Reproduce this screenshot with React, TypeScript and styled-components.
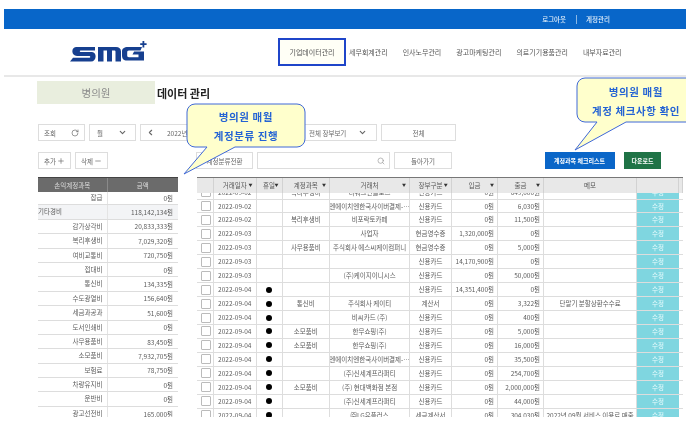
import React from 'react';
import styled, { createGlobalStyle } from 'styled-components';
import { ChevronDown, ChevronLeft, Minus, Plus, RotateCw, Search } from 'lucide-react';

const GlobalStyle = createGlobalStyle`
  html, body {
    margin: 0;
    padding: 0;
    background: #fff;
    font-family: "Noto Sans CJK KR", "Noto Sans", sans-serif;
  }
`;

const accounts = [
  { name: '잡급', amount: '0원' },
  { name: '기타경비', amount: '118,142,134원', total: true },
  { name: '감가상각비', amount: '20,833,333원' },
  { name: '복리후생비', amount: '7,029,320원' },
  { name: '여비교통비', amount: '720,750원' },
  { name: '접대비', amount: '0원' },
  { name: '통신비', amount: '134,335원' },
  { name: '수도광열비', amount: '156,640원' },
  { name: '세금과공과', amount: '51,600원' },
  { name: '도서인쇄비', amount: '0원' },
  { name: '사무용품비', amount: '83,450원' },
  { name: '소모품비', amount: '7,932,705원' },
  { name: '보험료', amount: '78,750원' },
  { name: '차량유지비', amount: '0원' },
  { name: '운반비', amount: '0원' },
  { name: '광고선전비', amount: '165,000원' },
];

const headers = [
  { label: '' },
  { label: '거래일자', arrow: true },
  { label: '휴일', arrow: true },
  { label: '계정과목', arrow: true },
  { label: '거래처', arrow: true },
  { label: '장부구분', arrow: true },
  { label: '입금', arrow: true },
  { label: '출금', arrow: true },
  { label: '메모' },
  { label: '' },
  { label: '' },
];

const NHN = '엔에이치엔한국사이버결제-…';
const SSG = '(주)신세계프라퍼티';

const ledger = [
  ['2022-09-02', false, '복리후생비', '더워크인클로즈', '신용카드', '0원', '649,000원', ''],
  ['2022-09-02', false, '', NHN, '신용카드', '0원', '6,030원', ''],
  ['2022-09-02', false, '복리후생비', '비포락토카페', '신용카드', '0원', '11,500원', ''],
  ['2022-09-03', false, '', '사업자', '현금영수증', '1,320,000원', '0원', ''],
  ['2022-09-03', false, '사무용품비', '주식회사 에스씨케이컴퍼니', '현금영수증', '0원', '5,000원', ''],
  ['2022-09-03', false, '', '', '신용카드', '14,170,900원', '0원', ''],
  ['2022-09-03', false, '', '(주)케이지이니시스', '신용카드', '0원', '50,000원', ''],
  ['2022-09-04', true, '', '', '신용카드', '14,351,400원', '0원', ''],
  ['2022-09-04', true, '통신비', '주식회사 케이티', '계산서', '0원', '3,322원', '단말기 분할상환수수료'],
  ['2022-09-04', true, '', '비씨카드 (주)', '신용카드', '0원', '400원', ''],
  ['2022-09-04', true, '소모품비', '한무쇼핑(주)', '신용카드', '0원', '5,000원', ''],
  ['2022-09-04', true, '소모품비', '한무쇼핑(주)', '신용카드', '0원', '16,000원', ''],
  ['2022-09-04', true, '', NHN, '신용카드', '0원', '35,500원', ''],
  ['2022-09-04', true, '', SSG, '신용카드', '0원', '254,700원', ''],
  ['2022-09-04', true, '소모품비', '(주) 현대백화점 본점', '신용카드', '0원', '2,000,000원', ''],
  ['2022-09-04', true, '', SSG, '신용카드', '0원', '44,000원', ''],
  ['2022-09-04', true, '', '㈜LG유플러스', '세금계산서', '0원', '304,030원', '2022년 09월 서비스 이용료 매출'],
] as const;

const navItems = ['세무회계관리', '인사노무관리', '광고마케팅관리', '의료기기용품관리', '내부자료관리'];

const Logo = () => (
  <svg width="78" height="22" viewBox="0 0 78 22" fill="#163f8f">
    <path d="M6 6h19v3.6H10.500c-.9 0-.9 1.400 0 1.400H22c5 0 5 9.600-1 9.600H0l3-3.800h16.500c1 0 1-1.800 0-1.800H7C1 15 1 6 6 6z" />
    <path d="M28 6h18c3 0 5 1.500 5 4.500v10.100h-5.500V10.500c0-.6-.4-.9-.9-.9h-2.600v11h-5v-11h-3.500v11H28z" />
    <path d="M58 6h14l-1.500 3.600H59c-1.500 0-1.800.8-1.800 2v3c0 1.200.5 1.600 1.800 1.600h9.500v-2.600h-6l1.600-3h9.900v9H57c-3.500 0-5-2-5-5v-4.600C52 8 54 6 58 6z" />
    <path d="M72.500 0h1.800v2.300h2.300v1.800h-2.300v2.300h-1.800V4.100h-2.300V2.300h2.300z" />
  </svg>
);

const Callout = ({ right }: { right?: boolean }) =>
  right ? (
    <svg width="125" height="76" viewBox="0 0 125 76">
      <path
        d="M12 2H140V46H53L2 74 24 46H12A8 8 0 0 1 4 38V10A8 8 0 0 1 12 2Z"
        fill="#ffffcc"
        stroke="#3f68d8"
      />
    </svg>
  ) : (
    <svg width="125" height="73" viewBox="0 0 125 73">
      <path
        d="M12 1H114A8 8 0 0 1 122 9V36A8 8 0 0 1 114 44H52L1 71 24 44H12A8 8 0 0 1 4 36V9A8 8 0 0 1 12 1Z"
        fill="#ffffcc"
        stroke="#3f68d8"
      />
    </svg>
  );

const App = () => (
  <Page>
    <GlobalStyle />
    <TopBar>
      <TopLink>로그아웃</TopLink>
      <TopDivider />
      <TopLink>계정관리</TopLink>
    </TopBar>
    <Header>
      <LogoWrap>
        <Logo />
      </LogoWrap>
      <Nav>
        <ActiveNavItem>기업데이터관리</ActiveNavItem>
        {navItems.map(item => (
          <NavItem key={item}>{item}</NavItem>
        ))}
      </Nav>
    </Header>

    <TitleRow>
      <TitleBadge>병의원</TitleBadge>
      <Title>데이터 관리</Title>
    </TitleRow>

    <ToolRow>
      <ToolButton $width={47}>
        조회 <RotateCw size={8} />
      </ToolButton>
      <SelectButton $width={47}>
        월 <ChevronDown size={9} strokeWidth={3} />
      </SelectButton>
      <ToolButton $width={153}>
        <ChevronLeft size={9} strokeWidth={3} />
        <DateText>2022년 09월</DateText>
      </ToolButton>
      <LedgerSelect $width={80}>
        전체 장부보기 <ChevronDown size={9} strokeWidth={3} />
      </LedgerSelect>
      <CenterButton $width={75}>전체</CenterButton>
    </ToolRow>

    <ToolRow $gap={11}>
      <ToolButton $width={33}>
        추가 <Plus size={8} />
      </ToolButton>
      <ToolButton $width={33}>
        삭제 <Minus size={8} />
      </ToolButton>
      <CenterButton $width={57} $left={84}>
        계정분류전환
      </CenterButton>
      <SearchBox>
        <Search size={8} color="#999" />
      </SearchBox>
      <CenterButton $width={58}>돌아가기</CenterButton>
      <FilledButton $width={70} $color="#0a66c8" $left={88.5}>
        계정과목 체크리스트
      </FilledButton>
      <FilledButton $width={37} $color="#1f7346" $left={5.5}>
        다운로드
      </FilledButton>
    </ToolRow>

    <Tables>
      <AccountTable>
        <AccountHead>
          <span>손익계정과목</span>
          <span>금액</span>
        </AccountHead>
        {accounts.map(row => (
          <AccountRow key={row.name} $total={row.total}>
            <AccountName $total={row.total}>{row.name}</AccountName>
            <AccountAmount>{row.amount}</AccountAmount>
          </AccountRow>
        ))}
      </AccountTable>

      <Ledger>
        <LedgerHead>
          {headers.map((head, i) => (
            <HeadCell key={i}>
              {head.label}
              {head.arrow && <SortArrow>▼</SortArrow>}
            </HeadCell>
          ))}
        </LedgerHead>
        <LedgerBody>
          {ledger.map((row, i) => (
            <LedgerRow key={i}>
              <Cell>
                <Check />
              </Cell>
              <Cell>{row[0]}</Cell>
              <Cell>{row[1] && <Dot />}</Cell>
              <Cell>{row[2]}</Cell>
              <Cell>{row[3]}</Cell>
              <Cell>{row[4]}</Cell>
              <MoneyCell>{row[5]}</MoneyCell>
              <MoneyCell>{row[6]}</MoneyCell>
              <Cell>{row[7]}</Cell>
              <EditCell>수정</EditCell>
            </LedgerRow>
          ))}
        </LedgerBody>
      </Ledger>
    </Tables>

    <LeftCallout>
      <Callout />
      <CalloutText>
        <div>병의원 매월</div>
        <div>계정분류 진행</div>
      </CalloutText>
    </LeftCallout>
    <RightCallout>
      <Callout right />
      <CalloutText>
        <div>병의원 매월</div>
        <div>계정 체크사항 확인</div>
      </CalloutText>
    </RightCallout>
  </Page>
);

const Page = styled.div`
  position: relative;
  width: 682px;
  height: 408px;
  margin: 9px 0 0 4px;
  overflow: hidden;
  background: #fff;
  color: #5c5c5c;
  font-size: 7px;
  filter: blur(0.35px);
`;
const TopBar = styled.div`
  height: 20px;
  padding-right: 76px;
  background: #0866c9;
  display: flex;
  justify-content: flex-end;
  align-items: center;
`;
const TopLink = styled.span`
  color: #e6f0fa;
  font-size: 6.5px;
  font-weight: 500;
`;
const TopDivider = styled.i`
  width: 1px;
  height: 9px;
  margin: 0 9.5px;
  background: #8ab8e6;
`;
const Header = styled.div`
  height: 46px;
  border-bottom: 2px solid #e8e8e8;
  display: flex;
  align-items: center;
`;
const LogoWrap = styled.div`
  width: 274px;
  padding-left: 66px;
  box-sizing: border-box;
  display: flex;
`;
const Nav = styled.nav`
  display: flex;
  align-items: center;
  gap: 15px;
`;
const NavItem = styled.a`
  font-size: 7px;
  color: #555;
  white-space: nowrap;
`;
const ActiveNavItem = styled(NavItem)`
  width: 68px;
  height: 28px;
  box-sizing: border-box;
  margin-right: -12px;
  border: 2px solid #1f45c9;
  background: #fffff6;
  display: flex;
  align-items: center;
  justify-content: center;
`;
const TitleRow = styled.div`
  margin: 4px 0 0 33px;
  display: flex;
  align-items: center;
`;
const TitleBadge = styled.div`
  width: 118px;
  height: 23px;
  background: #e9eede;
  color: #8b8b8b;
  font-size: 10.5px;
  display: flex;
  align-items: center;
  justify-content: center;
`;
const Title = styled.h1`
  margin: 0 0 0 2px;
  color: #222;
  font-size: 11px;
  font-weight: 700;
`;
const ToolRow = styled.div<{ $gap?: number }>`
  height: 17px;
  margin: ${p => p.$gap ?? 20}px 0 0 34px;
  display: flex;
  gap: 4px;
`;
const ToolButton = styled.div<{ $width: number }>`
  width: ${p => p.$width}px;
  box-sizing: border-box;
  padding: 0 5px;
  border: 1px solid #ddd;
  display: flex;
  align-items: center;
  justify-content: space-between;
  font-size: 6.5px;
  color: #666;
`;
const SelectButton = styled(ToolButton)`
  padding: 0 8px 0 7px;
`;
const DateText = styled.span`
  flex: 1;
  margin-left: 12px;
`;
const LedgerSelect = styled(ToolButton)`
  padding: 0 9px 0 12px;
  border-left: none;
`;
const CenterButton = styled.div<{ $width: number; $left?: number }>`
  width: ${p => p.$width}px;
  margin-left: ${p => p.$left ?? 0}px;
  box-sizing: border-box;
  border: 1px solid #ddd;
  display: flex;
  align-items: center;
  justify-content: center;
  font-size: 6.5px;
  color: #666;
`;
const SearchBox = styled.div`
  width: 133px;
  box-sizing: border-box;
  padding-right: 4px;
  border: 1px solid #ddd;
  display: flex;
  align-items: center;
  justify-content: flex-end;
`;
const FilledButton = styled.div<{ $width: number; $color: string; $left: number }>`
  width: ${p => p.$width}px;
  margin-left: ${p => p.$left}px;
  background: ${p => p.$color};
  color: #fff;
  font-size: 6px;
  font-weight: 700;
  display: flex;
  align-items: center;
  justify-content: center;
  white-space: nowrap;
`;
const Tables = styled.div`
  height: 240px;
  margin: 8px 0 0 34px;
  display: flex;
  gap: 18.7px;
`;
const AccountTable = styled.div`
  width: 140px;
  overflow: hidden;
  font-size: 6.5px;
`;
const AccountHead = styled.div`
  position: relative;
  z-index: 1;
  height: 15px;
  margin-bottom: -1px;
  background: #6b6b6b;
  border-top: 1px solid #444;
  box-sizing: border-box;
  color: #ddd;
  display: grid;
  grid-template-columns: 69.5px 1fr;
  align-items: center;
  text-align: center;
  span:first-child {
    border-right: 1px solid #8a8a8a;
    line-height: 14px;
  }
`;
const AccountRow = styled.div<{ $total?: boolean }>`
  height: 14.4px;
  box-sizing: border-box;
  border-bottom: 1px solid #ddd;
  background: ${p => (p.$total ? '#f3f4f6' : '#fff')};
  display: grid;
  grid-template-columns: 69.5px 1fr;
  align-items: center;
`;
const AccountName = styled.span<{ $total?: boolean }>`
  height: 100%;
  padding-right: ${p => (p.$total ? 0 : 4)}px;
  border-right: 1px solid #e4e4e4;
  text-align: ${p => (p.$total ? 'left' : 'right')};
  line-height: 13.4px;
`;
const AccountAmount = styled.span`
  padding-right: 5px;
  text-align: right;
`;
const columns = '17.3px 42.6px 26px 47.5px 80px 41.7px 46.3px 46px 93px 42px 1fr';
const Ledger = styled.div`
  width: 486.3px;
  overflow: hidden;
`;
const LedgerHead = styled.div`
  position: relative;
  z-index: 1;
  height: 15.5px;
  box-sizing: border-box;
  border-top: 1px solid #777;
  background: #e8e8e8;
  display: grid;
  grid-template-columns: ${columns};
`;
const HeadCell = styled.div`
  position: relative;
  border-right: 1px solid #d2d2d2;
  color: #555;
  font-size: 6.5px;
  line-height: 14px;
  text-align: center;
  white-space: nowrap;
`;
const SortArrow = styled.b`
  position: absolute;
  right: 3px;
  top: 0;
  color: #333;
  font-size: 4px;
`;
const LedgerBody = styled.div`
  margin-top: -6.9px;
`;
const LedgerRow = styled.div`
  height: 13.95px;
  box-sizing: border-box;
  border-bottom: 1px solid #ddd;
  display: grid;
  grid-template-columns: ${columns};
  font-size: 6.5px;
  line-height: 13px;
`;
const Cell = styled.div`
  border-right: 1px solid #ddd;
  display: flex;
  align-items: center;
  justify-content: center;
  white-space: nowrap;
  overflow: hidden;
`;
const MoneyCell = styled(Cell)`
  justify-content: flex-end;
  padding-right: 3px;
`;
const EditCell = styled(Cell)`
  border-right: none;
  background: #7fd6e0;
  color: #e8fbfd;
`;
const Check = styled.i`
  width: 10px;
  height: 10px;
  box-sizing: border-box;
  border: 1px solid #bbb;
  border-radius: 1px;
  margin-left: 2px;
`;
const Dot = styled.i`
  width: 6px;
  height: 6px;
  border-radius: 50%;
  background: #000;
`;
const FloatingNote = styled.div`
  position: absolute;
  svg {
    display: block;
  }
`;
const LeftCallout = styled(FloatingNote)`
  left: 179px;
  top: 94px;
  width: 125px;
  > div {
    left: 4px;
    width: 118px;
    top: 4px;
  }
`;
const RightCallout = styled(FloatingNote)`
  left: 569px;
  top: 67px;
  width: 125px;
  > div {
    left: 4px;
    width: 118px;
    top: 6px;
  }
`;
const CalloutText = styled.div`
  position: absolute;
  color: #2463d4;
  font-size: 10.5px;
  font-weight: 700;
  letter-spacing: 0.6px;
  line-height: 19px;
  text-align: center;
  white-space: nowrap;
`;

export default App;
